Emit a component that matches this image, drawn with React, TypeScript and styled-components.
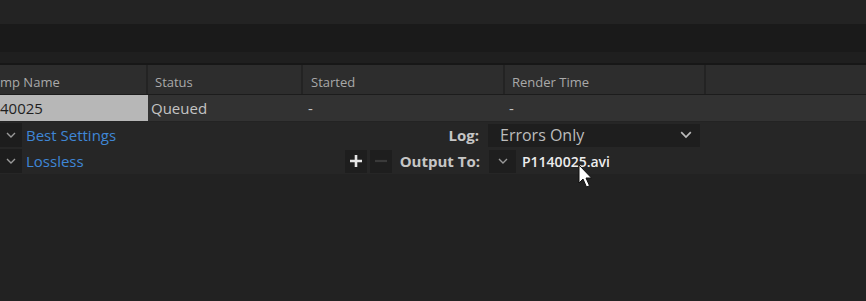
import styled, { createGlobalStyle } from "styled-components";

const GlobalStyle = createGlobalStyle`
  html, body {
    margin: 0;
    padding: 0;
    background: #222222;
  }
  body {
    font-family: "Open Sans", "Noto Sans", sans-serif;
    overflow: hidden;
  }
`;

const Page = styled.div`
  position: relative;
  width: 866px;
  height: 301px;
  background: #222222;
  overflow: hidden;
`;

const Band = styled.div<{ $h: number; $bg: string }>`
  height: ${(p) => p.$h}px;
  background: ${(p) => p.$bg};
`;

const HeaderRow = styled.div`
  display: flex;
  height: 29px;
  background: #2d2d2d;
  border-top: 2px solid #171717;
  border-bottom: 1px solid #1c1c1c;
`;

const HeaderCell = styled.div<{ $w: number; $pad: number }>`
  width: ${(p) => p.$w}px;
  flex: none;
  display: flex;
  align-items: center;
  padding-left: ${(p) => p.$pad}px;
  padding-top: 5px;
  box-sizing: border-box;
  font-size: 13px;
  color: #a9a9a9;
  border-right: 2px solid #232323;
  &:last-child {
    border-right: none;
    flex: 1;
  }
`;

const ItemRow = styled.div`
  display: flex;
  height: 26px;
  background: #323232;
  border-bottom: 1px solid #232323;
`;

const ItemCell = styled.div<{ $w: number; $pad: number; $sel?: boolean }>`
  width: ${(p) => p.$w}px;
  flex: none;
  display: flex;
  align-items: center;
  padding-left: ${(p) => p.$pad}px;
  box-sizing: border-box;
  font-size: 15px;
  color: ${(p) => (p.$sel ? "#1f1f1f" : "#c4c4c4")};
  background: ${(p) => (p.$sel ? "#b7b7b7" : "transparent")};
`;

const SubRow = styled.div`
  display: flex;
  align-items: center;
  height: 26px;
  background: #262626;
`;

const Twirl = styled.div`
  width: 22px;
  height: 24px;
  background: #1d1d1d;
  display: flex;
  align-items: center;
  justify-content: center;
  color: #9a9a9a;
`;

const SettingLink = styled.div<{ $w: number }>`
  width: ${(p) => p.$w}px;
  padding-left: 4px;
  font-size: 15px;
  color: #3f86d6;
`;

const Label = styled.div<{ $w: number }>`
  width: ${(p) => p.$w}px;
  text-align: right;
  font-size: 15px;
  font-weight: 700;
  color: #c6c6c6;
  padding-right: 9px;
`;

const Dropdown = styled.div`
  width: 212px;
  height: 23px;
  background: #1e1e1e;
  display: flex;
  align-items: center;
  justify-content: space-between;
  padding: 0 8px 0 12px;
  box-sizing: border-box;
  font-size: 16px;
  color: #bcbcbc;
`;

const SmallBtn = styled.div<{ $dim?: boolean }>`
  width: 22px;
  height: 23px;
  background: #1e1e1e;
  display: flex;
  align-items: center;
  justify-content: center;
  color: ${(p) => (p.$dim ? "#3a3a3a" : "#e6e6e6")};
  margin-right: 3px;
`;

const ChevBox = styled.div`
  width: 27px;
  height: 23px;
  background: #1e1e1e;
  display: flex;
  align-items: center;
  justify-content: center;
  color: #9a9a9a;
`;

const FileName = styled.div`
  padding-left: 6px;
  font-size: 14px;
  font-weight: 600;
  color: #ededed;
`;

const Cursor = styled.svg`
  position: absolute;
  left: 578px;
  top: 164px;
`;

const Chevron = ({ size = 10 }: { size?: number }) => (
  <svg width={size} height={size * 0.6} viewBox="0 0 10 6">
    <path d="M1 1 L5 5 L9 1" fill="none" stroke="currentColor" strokeWidth="1.4" />
  </svg>
);

const Plus = () => (
  <svg width="14" height="14" viewBox="0 0 14 14">
    <path d="M7 1 V13 M1 7 H13" stroke="currentColor" strokeWidth="2.6" />
  </svg>
);

const Minus = () => (
  <svg width="14" height="14" viewBox="0 0 14 14">
    <path d="M1 7 H13" stroke="currentColor" strokeWidth="2.2" />
  </svg>
);

const columns = [
  { title: "mp Name", w: 148, pad: 0 },
  { title: "Status", w: 155, pad: 7 },
  { title: "Started", w: 202, pad: 8 },
  { title: "Render Time", w: 201, pad: 7 },
  { title: "", w: 160, pad: 0 },
];

export default function App() {
  return (
    <>
      <GlobalStyle />
      <Page>
        <Band $h={24} $bg="#232323" />
        <Band $h={28} $bg="#1a1a1a" />
        <Band $h={11} $bg="#1f1f1f" />
        <HeaderRow>
          {columns.map((c, i) => (
            <HeaderCell key={i} $w={c.w} $pad={c.pad}>
              {c.title}
            </HeaderCell>
          ))}
        </HeaderRow>
        <ItemRow>
          <ItemCell $w={148} $pad={0} $sel>
            40025
          </ItemCell>
          <ItemCell $w={157} $pad={3}>
            Queued
          </ItemCell>
          <ItemCell $w={201} $pad={3}>
            -
          </ItemCell>
          <ItemCell $w={200} $pad={3}>
            -
          </ItemCell>
        </ItemRow>
        <SubRow>
          <Twirl>
            <Chevron />
          </Twirl>
          <SettingLink $w={360}>Best Settings</SettingLink>
          <Label $w={93}>Log:</Label>
          <Dropdown>
            Errors Only
            <Chevron size={12} />
          </Dropdown>
        </SubRow>
        <SubRow>
          <Twirl>
            <Chevron />
          </Twirl>
          <SettingLink $w={319}>Lossless</SettingLink>
          <SmallBtn>
            <Plus />
          </SmallBtn>
          <SmallBtn $dim>
            <Minus />
          </SmallBtn>
          <Label $w={85}>Output To:</Label>
          <ChevBox>
            <Chevron />
          </ChevBox>
          <FileName>P1140025.avi</FileName>
        </SubRow>
        <Cursor width="16" height="26" viewBox="0 0 16 26">
          <path
            d="M1 1 L1 19 L5 15 L8.5 23 L11.5 21.7 L8 14 L13.5 14 Z"
            fill="#ffffff"
            stroke="#111111"
            strokeWidth="1"
          />
        </Cursor>
      </Page>
    </>
  );
}
